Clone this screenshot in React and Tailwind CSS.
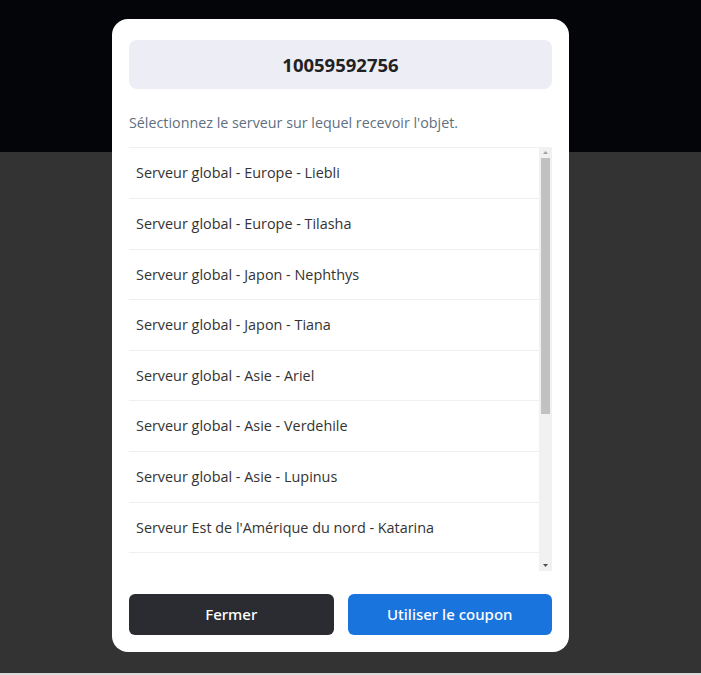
import React from 'react';

const servers = [
  'Serveur global - Europe - Liebli',
  'Serveur global - Europe - Tilasha',
  'Serveur global - Japon - Nephthys',
  'Serveur global - Japon - Tiana',
  'Serveur global - Asie - Ariel',
  'Serveur global - Asie - Verdehile',
  'Serveur global - Asie - Lupinus',
  "Serveur Est de l'Amérique du nord - Katarina",
  "Serveur Est de l'Amérique du nord - Fredrica",
  "Serveur Ouest de l'Amérique du nord - Zola",
  "Serveur Ouest de l'Amérique du nord - Sigrid",
  'Serveur Amérique du sud - Sophia',
  'Serveur Amérique du sud - Mirabel',
  'Serveur Océanie - Astrid',
];

export default function App() {
  return (
    <div className="relative h-[675px] w-full overflow-hidden" style={{ fontFamily: '"Open Sans", "Noto Sans", sans-serif' }}>
      {/* page behind the overlay */}
      <div className="flex h-full flex-col">
        <div className="h-[152px] bg-[#040508]" />
        <div className="flex-1 bg-[#333333]" />
        <div className="h-[2px] bg-[#d9d9d9]" />
      </div>

      {/* modal */}
      <div className="absolute left-[112px] top-[19px] flex w-[457px] flex-col rounded-[16px] bg-white px-[17px] pt-[21px] pb-[17px]">
        <div className="flex h-[49px] items-center justify-center rounded-[8px] bg-[#ededf6] text-[18.5px] font-bold text-[#222]">
          10059592756
        </div>
        <p className="mt-[23px] text-[14.3px] text-[#5f6f7f]">Sélectionnez le serveur sur lequel recevoir l'objet.</p>
        <div className="mt-[14px] flex h-[424px]">
          <ul className="flex-1 overflow-hidden border-t border-[#f0f0f0]">
            {servers.map((s) => (
              <li key={s} className="flex h-[50.6px] items-center border-b border-[#efefef] pl-[7px] text-[14.4px] text-[#333]">
                {s}
              </li>
            ))}
          </ul>
          {/* scrollbar */}
          <div className="flex w-[13px] flex-col items-center bg-[#f1f1f1]">
            <div className="flex h-[11px] w-full items-center justify-center">
              <svg width="5" height="3" viewBox="0 0 5 3"><path d="M2.5 0L5 3H0z" fill="#a3a3a3" /></svg>
            </div>
            <div className="h-[256px] w-[9px] bg-[#c1c1c1]" />
            <div className="flex-1" />
            <div className="flex h-[11px] w-full items-center justify-center">
              <svg width="5" height="3" viewBox="0 0 5 3"><path d="M0 0H5L2.5 3z" fill="#505050" /></svg>
            </div>
          </div>
        </div>
        <div className="mt-[23px] flex gap-[14px]" style={{ fontFamily: '"Noto Sans", sans-serif' }}>
          <button className="h-[41px] flex-1 rounded-[6px] bg-[#2a2c32] text-[15px] font-medium leading-none text-white">Fermer</button>
          <button className="h-[41px] flex-1 rounded-[6px] bg-[#1a74de] text-[15px] font-medium leading-none text-white">Utiliser le coupon</button>
        </div>
      </div>
    </div>
  );
}
